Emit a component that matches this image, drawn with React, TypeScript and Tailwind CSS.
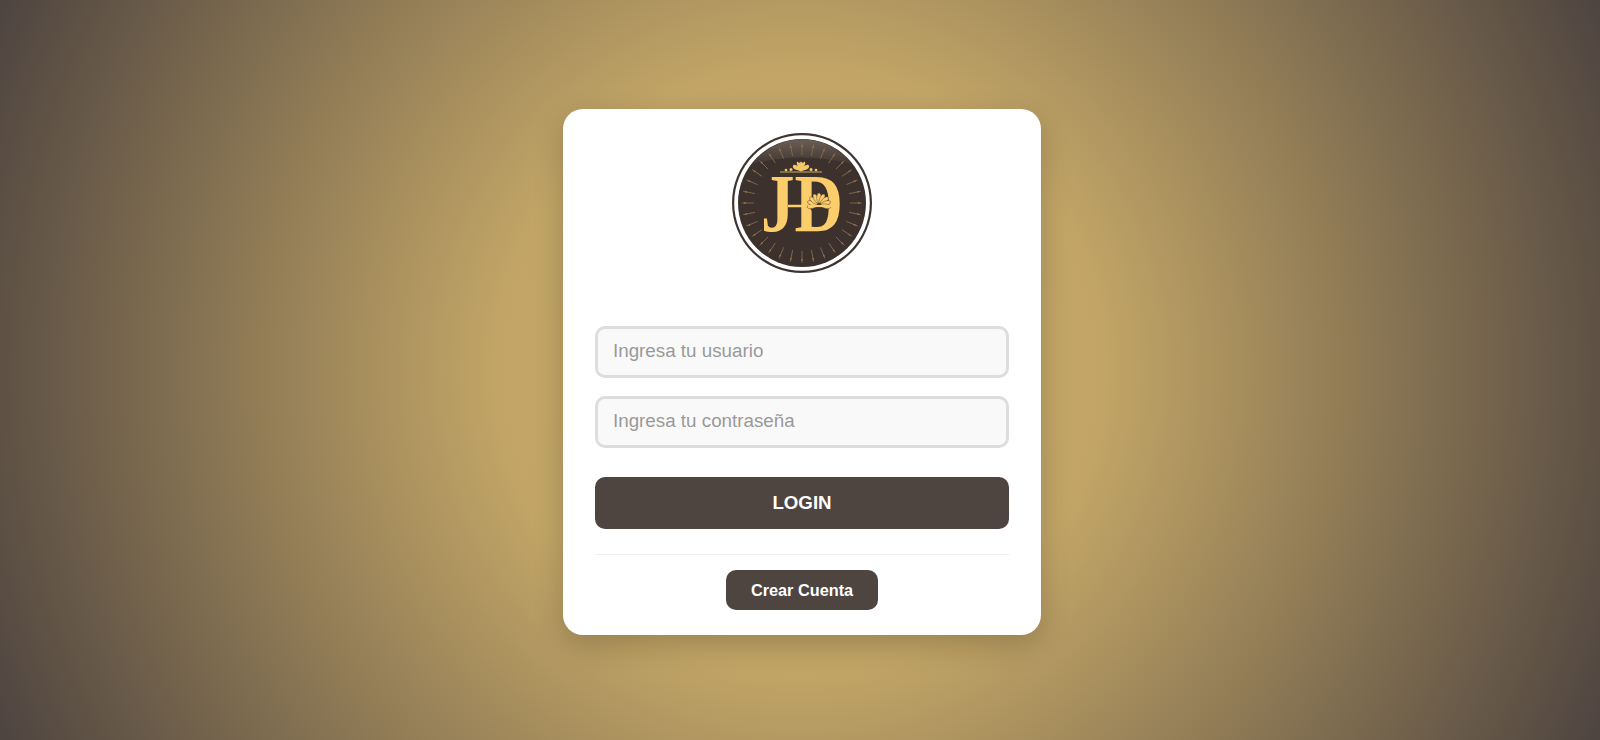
const rays = Array.from({ length: 32 }, (_, i) => i * 11.25);
const petals = [-100, -75, -50, -25, 0, 25, 50, 75, 100];

function Logo() {
  return (
    <svg viewBox="0 0 140 140" className="h-[140px] w-[140px]">
      <defs>
        <linearGradient id="gloss" x1="0" y1="0" x2="0" y2="1">
          <stop offset="0" stopColor="#6b5e56" />
          <stop offset="1" stopColor="#423631" />
        </linearGradient>
      </defs>
      <circle cx="70" cy="70" r="70" fill="#3f3430" />
      <circle cx="70" cy="70" r="67.800" fill="#fff" />
      <circle cx="70" cy="70" r="64" fill="#3d312d" />
      <path d="M 20 31 A 63 63 0 0 1 120 31 Q 70 18 20 31 Z" fill="url(#gloss)" />
      {rays.map((a) => (
        <g key={a} transform={`rotate(${a} 70 70)`}>
          <line x1="70" y1="10" x2="70" y2="22" stroke="#80694a" strokeWidth="0.9" />
          <circle cx="70" cy="13" r="0.900" fill="#8f7750" />
        </g>
      ))}
      {/* ornament above the letters */}
      <path d="M48 39 H90" stroke="#f3c869" strokeWidth="0.8" />
      <path
        d="M69 28.500 c1.500 2 3 1 3.500 0 c1.500 1.500 .5 3.500 -.5 4 c2 0 3 -1.500 4.500 -.5 c1.500 1.500 0 4 -2 4.500 c-1.500 .5 -3 1 -5.500 2 c-2.500 -1 -4 -1.500 -5.500 -2 c-2 -.5 -3.500 -3 -2 -4.500 c1.500 -1 2.500 .5 4.500 .5 c-1 -.5 -2 -2.500 -.5 -4 c.5 1 2 2 3.500 0 Z"
        fill="#f3c869"
      />
      <circle cx="54" cy="37" r="1.300" fill="#f3c869" />
      <circle cx="59" cy="36.500" r="1.500" fill="#f3c869" />
      <circle cx="79" cy="36.500" r="1.500" fill="#f3c869" />
      <circle cx="84" cy="37" r="1.300" fill="#f3c869" />
      {/* the monogram */}
      <text
        x="29"
        y="98"
        fill="#fbcd6b"
        fontWeight="bold"
        style={{ fontFamily: '"Liberation Serif", serif', fontSize: 82 }}
        textLength="82"
        lengthAdjust="spacingAndGlyphs"
      >
        JD
      </text>
      <path d="M56 73 H76" stroke="#fbcd6b" strokeWidth="2.500" />
      <circle cx="87" cy="71" r="10" fill="#3d312d" />
      <g fill="#fbcd6b" stroke="#3d312d" strokeWidth="0.4">
        {petals.map((a) => (
          <ellipse key={a} cx="87" cy="65" rx="2.200" ry="5" transform={`rotate(${a} 87 72)`} />
        ))}
      </g>
      <path d="M76 73 H100" stroke="#fbcd6b" strokeWidth="2.200" />
    </svg>
  );
}

export default function App() {
  return (
    <div className="flex h-[740px] w-full items-center justify-center overflow-hidden bg-[radial-gradient(circle,#c8aa6a_0%,#c2a566_34%,#4e4440_100%)] pl-1 pt-1 font-['Liberation_Sans',Arial,sans-serif]">
      <div className="flex h-[526px] w-[478px] flex-col items-center rounded-[20px] bg-white px-8 pt-[24px] shadow-[0_10px_30px_rgba(0,0,0,0.2)]">
        <Logo />
        <input
          type="text"
          placeholder="Ingresa tu usuario"
          className="mt-[53px] h-[52px] w-full rounded-[10px] border-[3px] border-[#dddddd] bg-[#f9f9f9] px-[15px] pb-[2px] text-[18.8px] outline-none placeholder:text-[#999999]"
        />
        <input
          type="password"
          placeholder="Ingresa tu contraseña"
          className="mt-[18px] h-[52px] w-full rounded-[10px] border-[3px] border-[#dddddd] bg-[#f9f9f9] px-[15px] pb-[2px] text-[18.8px] outline-none placeholder:text-[#999999]"
        />
        <button className="mt-[29px] h-[52px] w-full rounded-[10px] bg-[#4e4440] text-[18.700px] font-bold text-white">
          LOGIN
        </button>
        <div className="mt-[25px] h-px w-full bg-[#eeeeee]" />
        <button className="mt-[15px] h-[40px] w-[152px] rounded-[10px] bg-[#4e4440] text-[16.300px] font-bold text-white">
          Crear Cuenta
        </button>
      </div>
    </div>
  );
}
